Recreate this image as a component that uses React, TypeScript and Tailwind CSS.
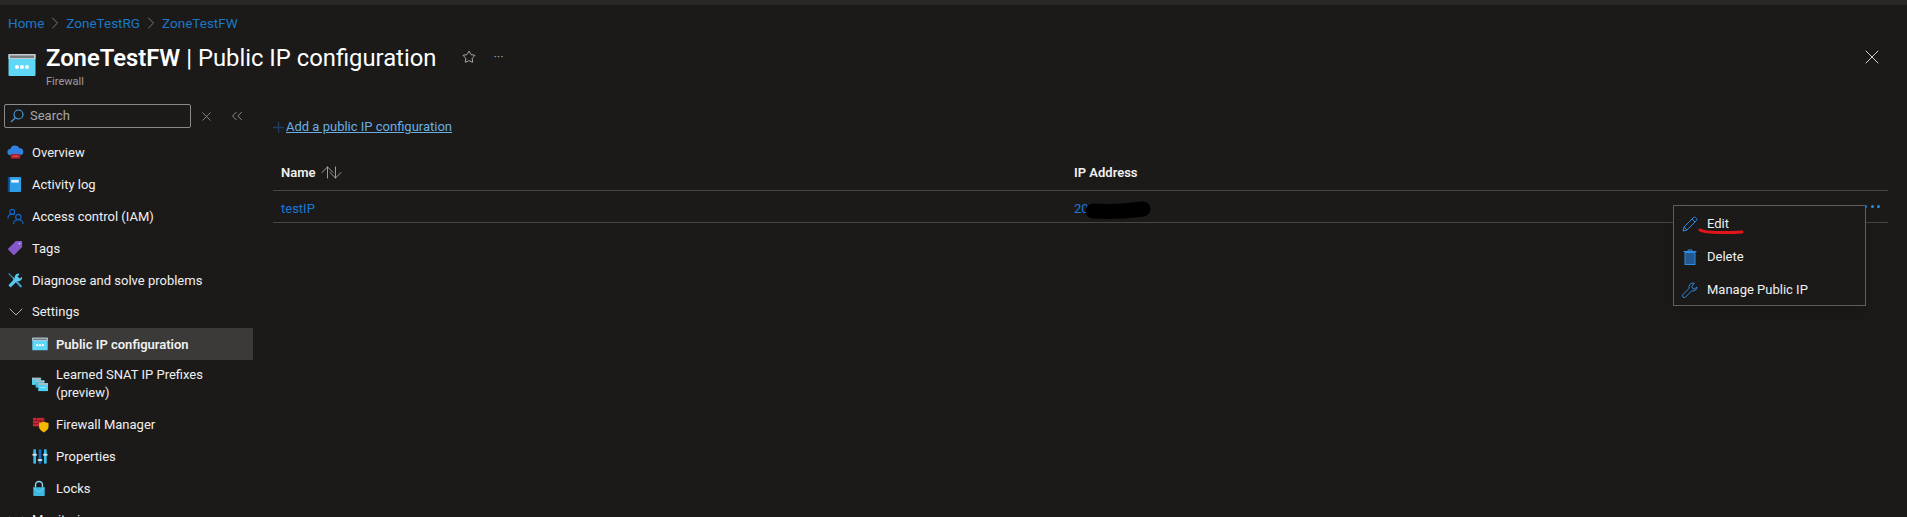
import React from 'react';
import { ChevronRight, ChevronDown, ChevronsLeft, Star, X, ArrowUp, ArrowDown, Plus } from 'lucide-react';

const FirewallIcon = ({ className }: { className?: string }) => (
  <svg viewBox="0 0 28 24" className={className}>
    <rect x="0.5" y="1" width="27" height="22" rx="1" fill="#5fd8f7" />
    <rect x="0.5" y="1" width="27" height="5" fill="#c4ccd2" />
    <rect x="2" y="2.5" width="24" height="2.5" fill="#1b1a19" opacity="0.45" />
    <circle cx="9" cy="14" r="2" fill="#fff" />
    <circle cx="14" cy="14" r="2" fill="#fff" />
    <circle cx="19" cy="14" r="2" fill="#fff" />
  </svg>
);

const SearchIcon = () => (
  <svg viewBox="0 0 14 14" className="w-[14px] h-[14px]" fill="none" stroke="#4aa0e8" strokeWidth="1.1">
    <circle cx="8.5" cy="5.5" r="4.5" />
    <path d="M5.2 8.8L1 13" />
  </svg>
);

const OverviewIcon = () => (
  <svg viewBox="0 0 18 18" className="w-[17px] h-[17px]">
    <path d="M4 12a3.4 3.4 0 0 1-.4-6.8A5 5 0 0 1 13 4.6 3.7 3.7 0 0 1 14 12z" fill="#2f82e0" />
    <rect x="4" y="10.5" width="10" height="5" fill="#b01e28" />
    <path d="M6 13h6" stroke="#e06670" strokeWidth="1" />
  </svg>
);

const ActivityIcon = () => (
  <svg viewBox="0 0 16 18" className="w-[15px] h-[17px]">
    <rect x="1" y="1" width="14" height="16" rx="1" fill="#2f9de8" />
    <rect x="1" y="1" width="2" height="16" fill="#124a80" />
    <rect x="4.5" y="4" width="8" height="3" fill="#e6f4fd" />
  </svg>
);

const IamIcon = () => (
  <svg viewBox="0 0 18 18" className="w-[17px] h-[17px]" fill="none" stroke="#1268c8" strokeWidth="1.2">
    <circle cx="5.5" cy="4" r="2.6" />
    <path d="M1 11c0-3 2-4.5 4.5-4.5 1 0 2 .3 2.6.8" />
    <circle cx="12" cy="9.5" r="2.8" />
    <path d="M7 17c0-3 2-4.5 5-4.5s5 1.5 5 4.5" />
  </svg>
);

const TagsIcon = () => (
  <svg viewBox="0 0 18 18" className="w-[16px] h-[16px]">
    <path d="M10 1h6.5a.5.5 0 0 1 .5.5V8L8.5 16.5a1 1 0 0 1-1.4 0l-5.6-5.6a1 1 0 0 1 0-1.4z" fill="#8458c8" />
    <circle cx="14" cy="4" r="1" fill="#d9c8f2" />
  </svg>
);

const DiagnoseIcon = () => (
  <svg viewBox="0 0 18 18" className="w-[17px] h-[17px]">
    <path d="M2 1l4.5 4.5 1 0L16 15l-1.5 1.8L6 7.5v-1L1.5 2z" fill="#3aa5d8" />
    <path d="M12 1.5a4 4 0 0 0-3.6 5.2L1.5 14l2.3 2.5 7-7A4 4 0 0 0 16 5l-2.4 2-2.4-2.3L13.4 2z" fill="#59c9ef" />
  </svg>
);

const LearnedIcon = () => (
  <svg viewBox="0 0 18 18" className="w-[16px] h-[16px]">
    <rect x="0" y="2" width="10" height="8" fill="#50d0f0" />
    <rect x="0" y="2" width="10" height="2" fill="#b0bcc4" />
    <rect x="4" y="5" width="10" height="8" fill="#3fbde0" />
    <rect x="4" y="5" width="10" height="2" fill="#b0bcc4" />
    <rect x="7" y="8" width="11" height="9" fill="#50d0f0" />
    <rect x="7" y="8" width="11" height="2" fill="#b0bcc4" />
    <path d="M10 13h5" stroke="#fff" strokeDasharray="1 1" />
  </svg>
);

const ManagerIcon = () => (
  <svg viewBox="0 0 18 18" className="w-[17px] h-[17px]">
    <rect x="1" y="2" width="12" height="9" fill="#c22a30" />
    <path d="M1 5h12M1 8h12M5 2v3M9 5v3" stroke="#701418" strokeWidth="0.7" />
    <path d="M12.5 6l5 1.5v4c0 3-2.5 4.5-5 6-2.5-1.5-5-3-5-6v-4z" fill="#f5b800" />
  </svg>
);

const PropertiesIcon = () => (
  <svg viewBox="0 0 18 18" className="w-[16px] h-[17px]">
    <rect x="1.5" y="1" width="3" height="16" fill="#35c0ec" />
    <rect x="7.5" y="1" width="3" height="16" fill="#1668c0" />
    <rect x="13.5" y="1" width="3" height="16" fill="#35c0ec" />
    <rect x="0.5" y="6" width="5" height="2" fill="#dfe5e8" />
    <rect x="6.5" y="12" width="5" height="2" fill="#dfe5e8" />
    <rect x="12.5" y="6" width="5" height="2" fill="#dfe5e8" />
  </svg>
);

const LockIcon = () => (
  <svg viewBox="0 0 16 18" className="w-[14px] h-[17px]">
    <path d="M4 8V5a4 4 0 0 1 8 0v3" fill="none" stroke="#8fd3ee" strokeWidth="1.6" />
    <rect x="1.5" y="7.5" width="13" height="10" rx="0.8" fill="#3cb8e2" />
    <path d="M1.5 8l6.5 5 6.5-5" fill="none" stroke="#7fd8f2" strokeWidth="0.8" />
  </svg>
);

const PencilIcon = () => (
  <svg viewBox="0 0 16 16" className="w-[16px] h-[16px]" fill="none" stroke="#2f8ae0" strokeWidth="1">
    <path d="M1 15l1-4L11.5 1.5a1.4 1.4 0 0 1 2 0l1 1a1.4 1.4 0 0 1 0 2L5 14z" />
    <path d="M10 3l3 3M2 11l3 3" />
  </svg>
);

const TrashIcon = () => (
  <svg viewBox="0 0 16 16" className="w-[16px] h-[16px]">
    <rect x="3" y="3.5" width="10" height="12" fill="#24598f" stroke="#2f8ae0" strokeWidth="1" />
    <path d="M1.5 2.5h13M6 2.5V1h4v1.5" fill="none" stroke="#2f8ae0" strokeWidth="1" />
  </svg>
);

const WrenchIcon = () => (
  <svg viewBox="0 0 16 16" className="w-[16px] h-[16px]" fill="none" stroke="#2f8ae0" strokeWidth="1">
    <path d="M11 1a4 4 0 0 0-3.8 5.2L1 12.5a1.7 1.7 0 0 0 2.5 2.5l6.3-6.2A4 4 0 0 0 15 5l-2.5 2-2-.7-.6-2L12.3 1.2A4 4 0 0 0 11 1z" />
  </svg>
);

type NavItem = { label: string; icon: React.ReactNode };

const topItems: NavItem[] = [
  { label: 'Overview', icon: <OverviewIcon /> },
  { label: 'Activity log', icon: <ActivityIcon /> },
  { label: 'Access control (IAM)', icon: <IamIcon /> },
  { label: 'Tags', icon: <TagsIcon /> },
  { label: 'Diagnose and solve problems', icon: <DiagnoseIcon /> },
];

const settingsItems: NavItem[] = [
  { label: 'Firewall Manager', icon: <ManagerIcon /> },
  { label: 'Properties', icon: <PropertiesIcon /> },
  { label: 'Locks', icon: <LockIcon /> },
];

const Sidebar = () => (
  <aside className="w-[254px] shrink-0 text-[13px] text-[#f0f0f0]">
    <div className="flex items-center pl-1 h-[24px]">
      <div className="w-[187px] h-[24px] flex items-center gap-[6px] pl-[5px] border border-[#8a8a8a] rounded-[2px]">
        <SearchIcon />
        <span className="text-[#a8a8a8]">Search</span>
      </div>
      <X className="ml-[8px] w-[15px] h-[15px] text-[#a0a0a0]" strokeWidth={1.2} />
      <ChevronsLeft className="ml-[14px] w-[18px] h-[18px] text-[#a0a0a0]" strokeWidth={1.1} />
    </div>
    <nav className="mt-[8px]">
      {topItems.map((item) => (
        <div key={item.label} className="h-[32px] flex items-center">
          <span className="w-[32px] pl-[7px] flex justify-start">{item.icon}</span>
          <span className="pt-[2px]">{item.label}</span>
        </div>
      ))}
      <div className="h-[32px] flex items-center">
        <span className="w-[32px] pl-[4px]">
          <ChevronDown className="w-[24px] h-[24px] text-[#b0b0b0]" strokeWidth={1} />
        </span>
        <span>Settings</span>
      </div>
      <div className="h-[32px] w-[253px] flex items-center bg-[#3b3a39] font-semibold">
        <span className="w-[56px] pl-[32px]"><FirewallIcon className="w-[16px] h-[14px]" /></span>
        <span className="pt-[2px]">Public IP configuration</span>
      </div>
      <div className="h-[48px] flex items-center">
        <span className="w-[56px] pl-[32px]"><LearnedIcon /></span>
        <span className="leading-[18px]">Learned SNAT IP Prefixes<br />(preview)</span>
      </div>
      {settingsItems.map((item) => (
        <div key={item.label} className="h-[32px] flex items-center">
          <span className="w-[56px] pl-[32px]">{item.icon}</span>
          <span className="pt-[2px]">{item.label}</span>
        </div>
      ))}
      <div className="h-[32px] flex items-center">
        <span className="w-[32px] pl-[4px]">
          <ChevronDown className="w-[24px] h-[24px] text-[#b0b0b0]" strokeWidth={1} />
        </span>
        <span>Monitoring</span>
      </div>
    </nav>
  </aside>
);

const ContextMenu = () => (
  <div className="absolute left-[1419px] top-[101px] w-[193px] h-[101px] py-[1px] bg-[#1b1a19] border border-[#605e5c] shadow-lg text-[13px] text-[#f0f0f0]">
    {[
      { label: 'Edit', icon: <PencilIcon /> },
      { label: 'Delete', icon: <TrashIcon /> },
      { label: 'Manage Public IP', icon: <WrenchIcon /> },
    ].map((item) => (
      <div key={item.label} className="h-[33px] flex items-center gap-[9px] pl-[8px]">
        {item.icon}
        <span>{item.label}</span>
      </div>
    ))}
    <svg viewBox="0 0 46 8" className="absolute left-[24px] top-[21px] w-[46px] h-[8px]">
      <path d="M2 3c4 2 10 2.5 20 2.5s14 0 22-.5" fill="none" stroke="#e3141a" strokeWidth="3" strokeLinecap="round" />
    </svg>
  </div>
);

const App = () => {
  return (
    <div
      className="w-[1907px] h-[517px] overflow-hidden bg-[#1b1a19] text-white"
      style={{ fontFamily: 'Roboto, sans-serif' }}
    >
      <div className="h-[5px] bg-[#292827]" />
      <div className="h-[36px] pl-[8px] flex items-center gap-[1px] text-[13.5px] text-[#1a78c8]">
        <span>Home</span>
        <ChevronRight className="w-[20px] h-[20px] text-[#8a8886]" strokeWidth={1} />
        <span>ZoneTestRG</span>
        <ChevronRight className="w-[20px] h-[20px] text-[#8a8886]" strokeWidth={1} />
        <span>ZoneTestFW</span>
      </div>
      <div className="h-[63px] flex items-start pl-[8px] pr-[23px]">
        <FirewallIcon className="w-[28px] h-[24px] mt-[12px] mr-[10px]" />
        <div className="pt-[1px]">
          <div className="text-[23.8px] leading-[32px]">
            <span className="font-semibold">ZoneTestFW</span> | Public IP configuration
          </div>
          <div className="text-[11px] leading-[14px] mt-[1px] text-[#a19f9d]">Firewall</div>
        </div>
        <Star className="ml-[26px] mt-[9px] w-[14px] h-[14px] text-[#e8e8e8]" strokeWidth={1.2} />
        <span className="ml-[17px] mt-[6px] text-[13px] text-[#a19f9d]">···</span>
        <X className="ml-auto mt-[4px] w-[24px] h-[24px] text-[#d0d0d0]" strokeWidth={1} />
      </div>
      <div className="flex">
        <Sidebar />
        <main className="relative flex-1 pl-[19px] pr-[19px] text-[13px]">
          <div className="mt-[12px] h-[22px] flex items-center text-[#69afe5]">
            <Plus className="w-[17px] h-[17px] -ml-[3px] mr-[-1px] text-[#1a3f63]" strokeWidth={2} />
            <span className="underline">Add a public IP configuration</span>
          </div>
          <div className="mt-[21px] h-[32px] pb-[4px] flex items-center border-b border-[#484644] font-semibold text-[#f0f0f0]">
            <div className="w-[801px] pl-[8px] flex items-center gap-[3px]">
              Name
              <span className="flex text-[#b0b0b0]">
                <ArrowUp className="w-[19px] h-[19px] -mr-[11px]" strokeWidth={1.1} />
                <ArrowDown className="w-[19px] h-[19px]" strokeWidth={1.1} />
              </span>
            </div>
            <div>IP Address</div>
          </div>
          <div className="relative h-[32px] pt-[4px] flex items-center border-b border-[#484644] text-[#1a78d8]">
            <div className="w-[801px] pl-[8px]">testIP</div>
            <div>20</div>
            <svg viewBox="0 0 66 18" className="absolute left-[812px] top-[10px] w-[66px] h-[18px]">
              <path d="M8 10c14 1 34 0 50-2" fill="none" stroke="#000" strokeWidth="15" strokeLinecap="round" />
            </svg>
            <div className="absolute right-[8px] top-[14px] flex gap-[3.5px]">
              <span className="w-[3px] h-[3px] rounded-full bg-[#2f8ae0]" />
              <span className="w-[3px] h-[3px] rounded-full bg-[#2f8ae0]" />
              <span className="w-[3px] h-[3px] rounded-full bg-[#2f8ae0]" />
            </div>
          </div>
          <ContextMenu />
        </main>
      </div>
    </div>
  );
};

export default App;
